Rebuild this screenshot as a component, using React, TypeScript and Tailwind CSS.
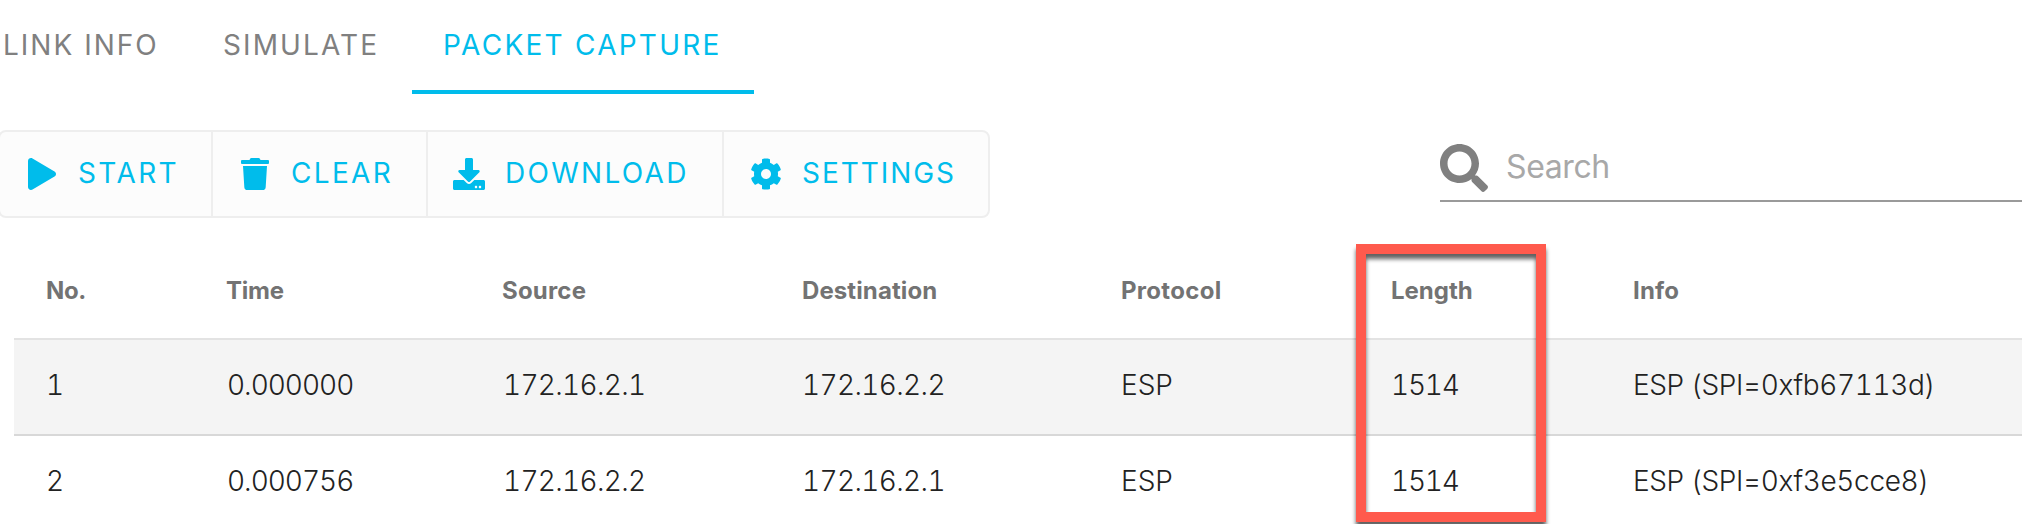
import { FaPlay, FaTrash, FaDownload, FaCog, FaSearch } from "react-icons/fa";

const rows = [
  ["1", "0.000000", "172.16.2.1", "172.16.2.2", "ESP", "1514", "ESP (SPI=0xfb67113d)"],
  ["2", "0.000756", "172.16.2.2", "172.16.2.1", "ESP", "1514", "ESP (SPI=0xf3e5cce8)"],
];

const columns = [
  { label: "No.", head: "tracking-[-0.4px]", cell: "" },
  { label: "Time", head: "-ml-px tracking-[-0.2px]", cell: "tracking-[-1px]" },
  { label: "Source", head: "-ml-px tracking-[0.2px]", cell: "tracking-[-0.7px]" },
  { label: "Destination", head: "tracking-[0.1px]", cell: "tracking-[-0.65px]" },
  { label: "Protocol", head: "tracking-[0.3px]", cell: "" },
  { label: "Length", head: "", cell: "tracking-[-1.2px]" },
  { label: "Info", head: "tracking-[0.2px]", cell: "tracking-[-0.37px]" },
];

const grid = "grid grid-cols-[181px_276px_299px_319px_270px_242px_1fr] pl-8 items-center";

export default function App() {
  return (
    <div className="relative h-[524px] w-[2022px] overflow-hidden bg-white font-['Inter',sans-serif]">
      <nav className="flex h-[94px] text-[28px] leading-[90px] whitespace-nowrap text-[#808080]">
        <div className="w-[190px] pl-[3px] tracking-[2px]">LINK INFO</div>
        <div className="w-[222px] pl-[33px] tracking-[2.1px]">SIMULATE</div>
        <div className="w-[342px] border-b-4 border-[#00bceb] pl-[31px] tracking-[2.25px] text-[#00bceb]">PACKET CAPTURE</div>
      </nav>

      <div className="mt-9 flex justify-between">
        <div className="-ml-0.5 flex h-22 rounded-lg border-2 border-[#eeeeee] bg-[#fcfcfc] text-[28px] whitespace-nowrap text-[#00bceb]">
          <button className="flex w-[213px] items-center border-r-2 border-[#eeeeee] pl-7">
            <FaPlay className="h-8 w-7" />
            <span className="ml-[22px] pb-0.5 leading-[82px] tracking-[2.4px]">START</span>
          </button>
          <button className="flex w-[215px] items-center border-r-2 border-[#eeeeee] pl-7">
            <FaTrash className="h-8 w-7" />
            <span className="ml-[22px] pb-0.5 leading-[82px] tracking-[2.3px]">CLEAR</span>
          </button>
          <button className="flex w-[296px] items-center border-r-2 border-[#eeeeee] pl-[25px]">
            <FaDownload className="size-8" />
            <span className="ml-[20px] pb-0.5 leading-[82px] tracking-[2.3px]">DOWNLOAD</span>
          </button>
          <button className="flex w-[264px] items-center pl-[26px]">
            <FaCog className="size-8" />
            <span className="ml-[20px] pb-0.5 leading-[82px] tracking-[1.95px]">SETTINGS</span>
          </button>
        </div>
        <label className="mt-3 flex h-[60px] w-[582px] items-start border-b-2 border-[#9a9a9a] pt-0.5">
          <FaSearch className="size-12 text-[#808080]" />
          <span className="ml-4.5 text-[32px] leading-[46px] tracking-[-0.4px] text-[#a8a8a8]">Search</span>
        </label>
      </div>

      <div className="mt-[20px] ml-3.5">
        <div className={`${grid} h-[100px] pt-1.5 text-[24px] font-bold text-[#737373]`}>
          {columns.map((c) => (
            <div key={c.label} className={c.head}>{c.label}</div>
          ))}
        </div>
        {rows.map((r, i) => (
          <div
            key={i}
            className={`${grid} h-24 border-t-2 pb-1 text-[28px] font-light whitespace-nowrap text-[#222222] tabular-nums ${i === 0 ? "border-[#e3e3e3] bg-[#f4f4f4]" : "border-[#d8d8d8]"}`}
          >
            {r.map((v, j) => (
              <div key={j} className={columns[j].cell}>{v}</div>
            ))}
          </div>
        ))}
      </div>

      <div className="absolute top-[244px] left-[1356px] h-[278px] w-[190px] border-10 border-[#ff5a4d] drop-shadow-[0_5px_2px_rgba(0,0,0,0.62)]" />
    </div>
  );
}
